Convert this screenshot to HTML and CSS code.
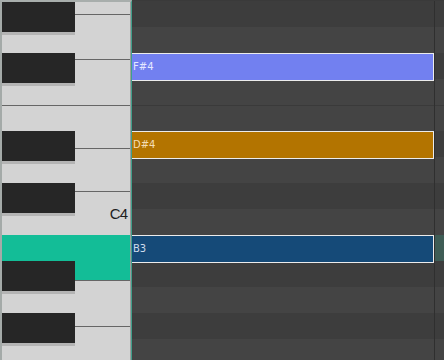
FILE: index.html
```html
<!DOCTYPE html>
<html lang="en">
<head>
    <meta charset="UTF-8">
    <meta name="viewport" content="width=device-width, initial-scale=1.0">
    <title>Piano Roll</title>
    <link rel="stylesheet" href="styles.css">
</head>
<body>
    <div class="roll">
        <div class="keyboard">
            <div class="keys">
                <div class="white-key" style="height: 12px;"></div>
                <div class="white-key" style="height: 44px;"></div>
                <div class="white-key" style="height: 45px;"></div>
                <div class="white-key" style="height: 42px;"></div>
                <div class="white-key" style="height: 42px;"></div>
                <div class="white-key c-key" style="height: 43px;"><span class="key-label">C4</span></div>
                <div class="white-key active" style="height: 45px;"></div>
                <div class="white-key" style="height: 45px;"></div>
                <div class="white-key last" style="height: 40px;"></div>

                <!-- black keys sit over the white ones -->
                <div class="black-key" style="top: 0px;"></div>
                <div class="black-key" style="top: 51px;"></div>
                <div class="black-key" style="top: 129px;"></div>
                <div class="black-key" style="top: 181px;"></div>
                <div class="black-key" style="top: 259px;"></div>
                <div class="black-key" style="top: 311px;"></div>
            </div>
        </div>

        <div class="grid">
            <div class="row dark"></div>   <!-- G#4 -->
            <div class="row"></div>        <!-- G4 -->
            <div class="row dark"></div>   <!-- F#4 -->
            <div class="row"></div>        <!-- F4 -->
            <div class="row split"></div>  <!-- E4 -->
            <div class="row dark"></div>   <!-- D#4 -->
            <div class="row"></div>        <!-- D4 -->
            <div class="row dark"></div>   <!-- C#4 -->
            <div class="row"></div>        <!-- C4 -->
            <div class="row active"></div> <!-- B3 -->
            <div class="row dark"></div>   <!-- A#3 -->
            <div class="row"></div>        <!-- A3 -->
            <div class="row dark"></div>   <!-- G#3 -->
            <div class="row"></div>        <!-- G3 -->

            <div class="bar-line" style="left: 302px;"></div>

            <div class="note note-fs4" style="top: 52px; width: 302px;">F#4</div>
            <div class="note note-ds4" style="top: 130px; width: 302px;">D#4</div>
            <div class="note note-b3" style="top: 234px; width: 302px;">B3</div>
        </div>
    </div>
</body>
</html>
```

FILE: styles.css
```css
body {
    margin: 0;
    width: 444px;
    height: 360px;
    overflow: hidden;
    background-color: #434343;
    font-family: "DejaVu Sans", sans-serif;
}
.roll {
    display: flex;
    height: 360px;
}
.keyboard {
    width: 132px;
    flex: none;
    box-sizing: border-box;
    border-left: 2px solid #a4aaa8;
    border-top: 2px solid #a8aeac;
    border-right: 1px solid #3f9f8b;
    background-color: #d3d3d3;
}
.keys {
    position: relative;
    height: 100%;
    border-right: 1px solid #9c9c9c;
}
.white-key {
    background-color: #d3d3d3;
    border-bottom: 1px solid #666;
}
.white-key.c-key {
    border-bottom: none;
    display: flex;
    align-items: flex-end;
    justify-content: flex-end;
}
.white-key.active {
    background-color: #13bd97;
}
.white-key.last {
    border-bottom: none;
}
.key-label {
    font-family: "Liberation Sans", sans-serif;
    font-size: 15px;
    line-height: 15px;
    letter-spacing: -1px;
    color: #1e1e1e;
    padding: 0 3px 14px 0;
}
.black-key {
    position: absolute;
    left: 0;
    width: 73px;
    height: 30px;
    background-color: #262626;
    box-shadow: 0 3px 0 #b4b4b4;
}
.grid {
    position: relative;
    flex: 1;
    border-top: 1px solid #3a3a3a;
    overflow: hidden;
}
.row {
    height: 26px;
    background-color: #444444;
}
.row.dark {
    background-color: #3d3d3d;
}
.row.split {
    box-shadow: inset 0 1px 0 #3a3a3a;
}
.row.active {
    background-color: #3e5c55;
}
.bar-line {
    position: absolute;
    top: 0;
    bottom: 0;
    width: 1px;
    background-color: #2f2f2f;
}
.note {
    position: absolute;
    left: 0;
    height: 28px;
    box-sizing: border-box;
    border: 1px solid #ececec;
    border-left: none;
    padding-left: 1px;
    font-size: 10px;
    line-height: 26px;
}
.note-fs4 {
    background-color: #7280f0;
    color: #e4e8ff;
}
.note-ds4 {
    background-color: #b37400;
    color: #f3ddb6;
}
.note-b3 {
    background-color: #154a78;
    color: #cfdcec;
}
```
